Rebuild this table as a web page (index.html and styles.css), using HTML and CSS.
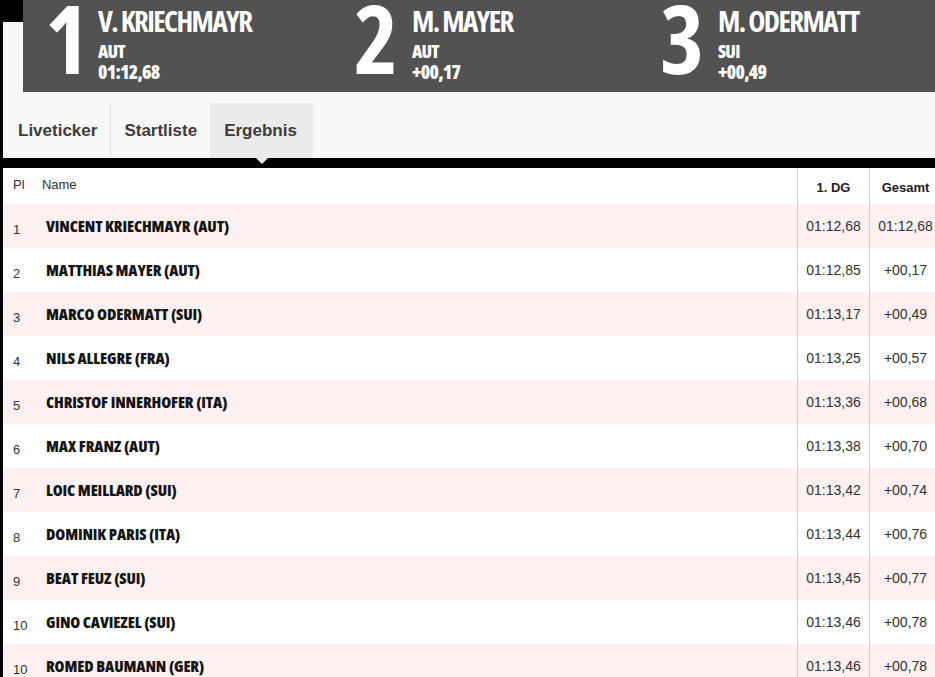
FILE: index.html
```html
<!DOCTYPE html>
<html lang="de">
<head>
<meta charset="utf-8">
<title>Ergebnis</title>
<link rel="stylesheet" href="styles.css">
</head>
<body>
<div class="page">
  <header class="top">
    <div class="podium">
      <div class="place">
        <span class="rank rank-1">1</span>
        <div class="info">
          <div class="who">V. KRIECHMAYR</div>
          <div class="nat">AUT</div>
          <div class="time">01:12,68</div>
        </div>
      </div>
      <div class="place">
        <span class="rank">2</span>
        <div class="info">
          <div class="who">M. MAYER</div>
          <div class="nat">AUT</div>
          <div class="time">+00,17</div>
        </div>
      </div>
      <div class="place">
        <span class="rank">3</span>
        <div class="info">
          <div class="who">M. ODERMATT</div>
          <div class="nat">SUI</div>
          <div class="time">+00,49</div>
        </div>
      </div>
    </div>
    <nav class="tabs">
      <a class="tab tab-first">Liveticker</a>
      <a class="tab">Startliste</a>
      <a class="tab tab-active">Ergebnis</a>
    </nav>
  </header>
  <div class="bar"></div>
  <div class="results">
    <div class="row head">
      <div class="c-pl">Pl</div>
      <div class="c-name">Name</div>
      <div class="c-dg">1. DG</div>
      <div class="c-tot">Gesamt</div>
    </div>
    <div class="row odd"><div class="c-pl">1</div><div class="c-name">VINCENT KRIECHMAYR (AUT)</div><div class="c-dg">01:12,68</div><div class="c-tot">01:12,68</div></div>
    <div class="row"><div class="c-pl">2</div><div class="c-name">MATTHIAS MAYER (AUT)</div><div class="c-dg">01:12,85</div><div class="c-tot">+00,17</div></div>
    <div class="row odd"><div class="c-pl">3</div><div class="c-name">MARCO ODERMATT (SUI)</div><div class="c-dg">01:13,17</div><div class="c-tot">+00,49</div></div>
    <div class="row"><div class="c-pl">4</div><div class="c-name">NILS ALLEGRE (FRA)</div><div class="c-dg">01:13,25</div><div class="c-tot">+00,57</div></div>
    <div class="row odd"><div class="c-pl">5</div><div class="c-name">CHRISTOF INNERHOFER (ITA)</div><div class="c-dg">01:13,36</div><div class="c-tot">+00,68</div></div>
    <div class="row"><div class="c-pl">6</div><div class="c-name">MAX FRANZ (AUT)</div><div class="c-dg">01:13,38</div><div class="c-tot">+00,70</div></div>
    <div class="row odd"><div class="c-pl">7</div><div class="c-name">LOIC MEILLARD (SUI)</div><div class="c-dg">01:13,42</div><div class="c-tot">+00,74</div></div>
    <div class="row"><div class="c-pl">8</div><div class="c-name">DOMINIK PARIS (ITA)</div><div class="c-dg">01:13,44</div><div class="c-tot">+00,76</div></div>
    <div class="row odd"><div class="c-pl">9</div><div class="c-name">BEAT FEUZ (SUI)</div><div class="c-dg">01:13,45</div><div class="c-tot">+00,77</div></div>
    <div class="row"><div class="c-pl">10</div><div class="c-name">GINO CAVIEZEL (SUI)</div><div class="c-dg">01:13,46</div><div class="c-tot">+00,78</div></div>
    <div class="row odd"><div class="c-pl">10</div><div class="c-name">ROMED BAUMANN (GER)</div><div class="c-dg">01:13,46</div><div class="c-tot">+00,78</div></div>
  </div>
</div>
</body>
</html>
```
FILE: styles.css
```css
html, body {
  margin: 0;
  padding: 0;
  overflow: hidden;
  background: #fff;
}

.page {
  border-left: 3px solid #000;
  min-height: 100vh;
  font-family: "Liberation Sans", Arial, sans-serif;
}

/* ---------- top: podium + tabs ---------- */
.top {
  background: linear-gradient(to bottom, #000 0, #000 22px, #f8f8f8 22px);
  padding-left: 20px;
}

.podium {
  background: #525252;
  height: 92px;
  display: grid;
  grid-template-columns: 309px 306px 1fr;
  padding-left: 22px;
  color: #fff;
  font-family: "Open Sans", sans-serif;
  font-stretch: 75%;
  font-weight: 800;
}

.place {
  display: flex;
  align-items: flex-start;
}

.rank {
  flex: none;
  width: 58px;
  font-size: 94px;
  line-height: 76px;
  letter-spacing: -1px;
  font-weight: 700;
}

.rank-1 {
  width: 53px;
}

.info {
  padding-top: 6px;
}

.who {
  font-size: 29px;
  line-height: 30px;
  font-weight: 700;
  letter-spacing: -1.6px;
}

.nat {
  font-size: 18px;
  line-height: 20px;
  margin-top: 5px;
  letter-spacing: -0.8px;
}

.time {
  font-size: 19px;
  line-height: 22px;
  letter-spacing: -0.7px;
}

.tabs {
  display: flex;
  margin-left: -20px;
  padding-top: 11px;
  height: 55px;
  background: #f8f8f8;
}

.tab {
  display: block;
  height: 55px;
  line-height: 55px;
  padding: 0 13px;
  font-size: 17px;
  font-weight: 700;
  color: #3c3c3c;
  position: relative;
}

.tab-first {
  padding-left: 15px;
  border-right: 1px solid #e4e4e4;
}

.tab-active {
  background: #ebebeb;
  padding: 0 16px 0 14px;
}

.tab-active::after {
  content: "";
  position: absolute;
  left: 50%;
  bottom: -6px;
  margin-left: -6px;
  border-left: 6px solid transparent;
  border-right: 6px solid transparent;
  border-top: 6px solid #ebebeb;
  z-index: 2;
}

.bar {
  height: 10px;
  background: #000;
}

/* ---------- results table ---------- */
.row {
  display: grid;
  grid-template-columns: 38px 1fr 72px 66px;
  height: 44px;
  align-items: stretch;
}

.row > div {
  display: flex;
  align-items: center;
}

.row.odd {
  background: #fcf0f0;
}

.c-pl {
  padding-left: 10px;
  font-size: 13px;
  color: #333;
  padding-top: 6px;
}

.c-name {
  padding-left: 5px;
  font-family: "Open Sans", sans-serif;
  font-stretch: 75%;
  font-weight: 800;
  font-size: 16px;
  color: #141414;
  letter-spacing: -0.1px;
}

.c-dg, .c-tot {
  border-left: 1px solid #cfcfcf;
  justify-content: center;
  font-size: 14px;
  color: #333;
}

.c-tot {
  padding-left: 6px;
}

.head {
  height: 36px;
}

.head .c-pl,
.head .c-name {
  font-family: "Liberation Sans", Arial, sans-serif;
  font-stretch: normal;
  font-weight: 400;
  font-size: 13px;
  color: #333;
  padding-top: 0;
  padding-bottom: 4px;
}

.head .c-name {
  padding-left: 1px;
}

.head .c-dg,
.head .c-tot {
  font-weight: 700;
  font-size: 13px;
  color: #222;
  padding-top: 3px;
}
```
